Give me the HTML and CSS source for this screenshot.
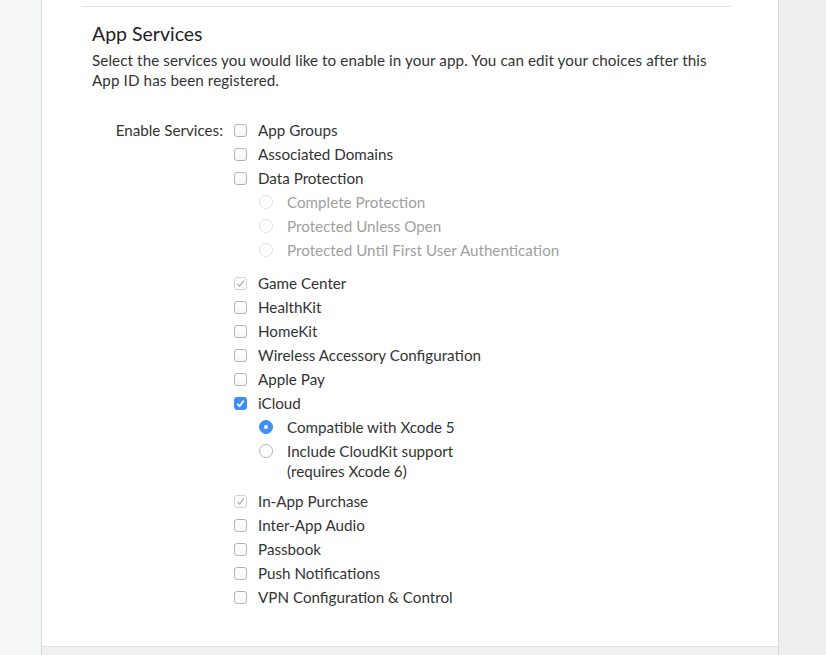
FILE: index.html
```html
<!DOCTYPE html>
<html>
<head>
<meta charset="utf-8">
<link rel="stylesheet" href="styles.css">
</head>
<body>
<div class="page">
  <div class="gutter"></div>
  <div class="panel">
    <div class="content">
      <div class="rule"></div>
      <h2 class="title">App Services</h2>
      <p class="desc">Select the services you would like to enable in your app. You can edit your choices after this App ID has been registered.</p>
      <div class="form">
        <div class="form-label">Enable Services:</div>
        <div class="options">
          <div class="row"><span class="cb"></span><span class="lbl">App Groups</span></div>
          <div class="row"><span class="cb"></span><span class="lbl">Associated Domains</span></div>
          <div class="row"><span class="cb"></span><span class="lbl">Data Protection</span></div>
          <div class="sub">
            <div class="row"><span class="rd rd-off"></span><span class="lbl lbl-off">Complete Protection</span></div>
            <div class="row"><span class="rd rd-off"></span><span class="lbl lbl-off">Protected Unless Open</span></div>
            <div class="row"><span class="rd rd-off"></span><span class="lbl lbl-off">Protected Until First User Authentication</span></div>
          </div>
          <div class="row"><span class="cb cb-dis"><svg viewBox="0 0 13 13" width="13" height="13"><path d="M3.3 6.8 L5.6 9.1 L9.8 3.6" fill="none" stroke="#a8a8a8" stroke-width="1.2"/></svg></span><span class="lbl">Game Center</span></div>
          <div class="row"><span class="cb"></span><span class="lbl">HealthKit</span></div>
          <div class="row"><span class="cb"></span><span class="lbl">HomeKit</span></div>
          <div class="row"><span class="cb"></span><span class="lbl">Wireless Accessory Configuration</span></div>
          <div class="row"><span class="cb"></span><span class="lbl">Apple Pay</span></div>
          <div class="row"><span class="cb cb-on"><svg viewBox="0 0 13 13" width="13" height="13"><path d="M3.3 6.8 L5.6 9.1 L9.8 3.6" fill="none" stroke="#ffffff" stroke-width="1.7"/></svg></span><span class="lbl">iCloud</span></div>
          <div class="sub sub-tight">
            <div class="row"><span class="rd rd-on"></span><span class="lbl">Compatible with Xcode 5</span></div>
            <div class="row row-multi"><span class="rd"></span><span class="lbl">Include CloudKit support<br>(requires Xcode 6)</span></div>
          </div>
          <div class="row"><span class="cb cb-dis"><svg viewBox="0 0 13 13" width="13" height="13"><path d="M3.3 6.8 L5.6 9.1 L9.8 3.6" fill="none" stroke="#a8a8a8" stroke-width="1.2"/></svg></span><span class="lbl">In-App Purchase</span></div>
          <div class="row"><span class="cb"></span><span class="lbl">Inter-App Audio</span></div>
          <div class="row"><span class="cb"></span><span class="lbl">Passbook</span></div>
          <div class="row"><span class="cb"></span><span class="lbl">Push Notifications</span></div>
          <div class="row"><span class="cb"></span><span class="lbl">VPN Configuration &amp; Control</span></div>
        </div>
      </div>
    </div>
    <div class="footer"></div>
  </div>
  <div class="side"></div>
</div>
</body>
</html>
```

FILE: styles.css
```css
* { box-sizing: border-box; }
html, body { margin: 0; padding: 0; }
body {
  font-family: "Lato", "Open Sans", sans-serif;
  color: #333;
  background: #efefef;
}
.page {
  display: flex;
  height: 655px;
  overflow: hidden;
}
.gutter {
  width: 41px;
  flex: none;
  background: #f6f8f8;
}
.panel {
  width: 738px;
  flex: none;
  display: flex;
  flex-direction: column;
  background: #fff;
  border-left: 1px solid #d6d6d6;
  border-right: 1px solid #d9d9d9;
  box-shadow: 1px 0 1px #e6e6e6;
}
.side {
  flex: 1;
  background: #efefef;
}
.content {
  flex: 1;
  padding-top: 6px;
}
.rule {
  margin-left: 40px;
  width: 649px;
  border-top: 1px solid #e3e3e3;
}
.title {
  margin: 15px 0 0 50px;
  font-size: 19.5px;
  line-height: 24px;
  font-weight: normal;
  color: #222;
}
.desc {
  margin: 4px 0 0 50px;
  width: 625px;
  font-size: 15.2px;
  letter-spacing: 0.1px;
  line-height: 20px;
}
.form {
  display: flex;
  margin-top: 28px;
  font-size: 15.2px;
}
.form-label {
  width: 192px;
  padding-right: 11px;
  text-align: right;
  line-height: 24px;
  flex: none;
}
.options {
  display: flex;
  flex-direction: column;
}
.row {
  display: flex;
  align-items: center;
  height: 24px;
}
.row-multi {
  align-items: flex-start;
  height: 42px;
  padding-top: 2px;
}
.row-multi .rd { margin-top: 3px; }
.row-multi .lbl { line-height: 20px; }
.cb {
  width: 13px;
  height: 13px;
  border: 1px solid #b6b6b6;
  border-radius: 3px;
  background: linear-gradient(#fff, #f7f7f7);
  margin-right: 11px;
  flex: none;
  position: relative;
}
.cb svg { position: absolute; left: -1px; top: -1px; }
.cb-dis { border-color: #d2d2d2; background: #fff; }
.cb-on { border-color: #3d8ff5; background: #3d8ff5; }
.sub {
  padding-left: 25px;
  margin-bottom: 9px;
}
.sub-tight { margin-bottom: 8px; }
.rd {
  width: 14px;
  height: 14px;
  border: 1px solid #b6b6b6;
  border-radius: 50%;
  background: #fff;
  margin-right: 14px;
  flex: none;
  position: relative;
}
.rd-off { border-color: #e2e2e2; }
.rd-on { border-color: #3d8ff5; background: #3d8ff5; }
.rd-on::after {
  content: "";
  position: absolute;
  left: 4px;
  top: 4px;
  width: 4px;
  height: 4px;
  border-radius: 50%;
  background: #fff;
}
.lbl { white-space: nowrap; }
.lbl-off { color: #a0a0a0; }
.footer {
  height: 9px;
  flex: none;
  background: #f0f0f0;
  border-top: 1px solid #e2e2e2;
}
```
